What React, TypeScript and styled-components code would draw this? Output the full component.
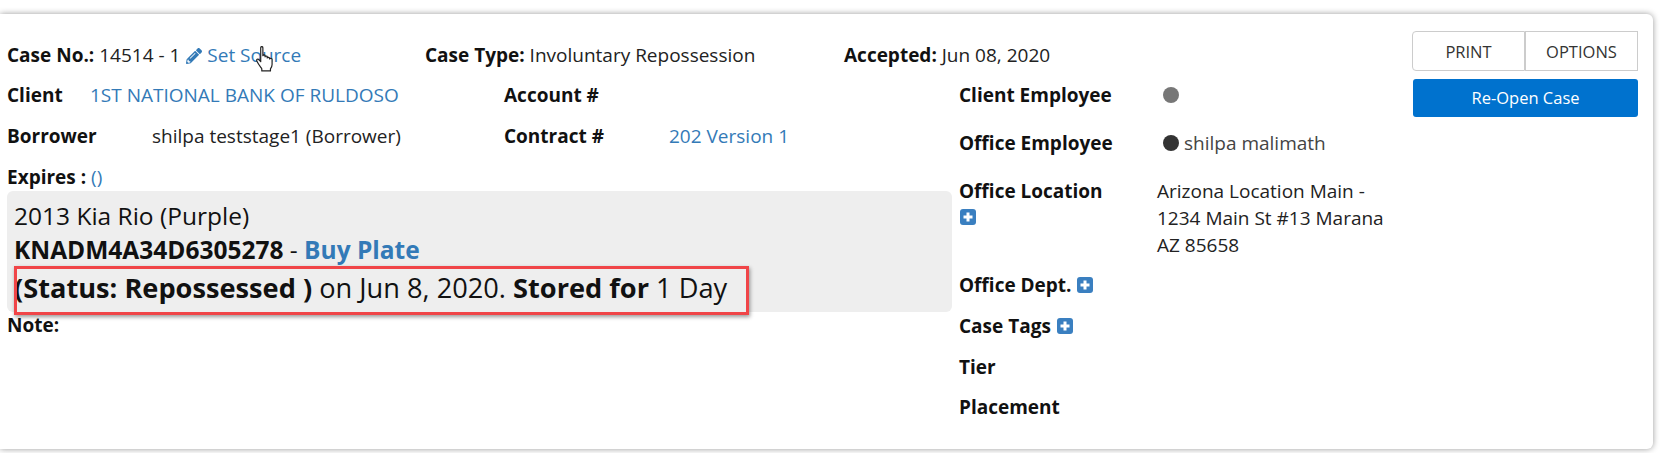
import styled, { createGlobalStyle } from "styled-components";
import { FaPencilAlt } from "react-icons/fa";

const GlobalStyle = createGlobalStyle`
  html, body {
    margin: 0;
    padding: 0;
    background: #fff;
  }
  body {
    font-family: "Open Sans", "Liberation Sans", sans-serif;
    font-size: 19px;
    color: #222;
    overflow: hidden;
  }
`;

const Page = styled.div`
  width: 1663px;
  height: 453px;
  padding-top: 14px;
  box-sizing: border-box;
  background: #fff;
`;

const Card = styled.div`
  position: relative;
  width: 1653px;
  height: 435px;
  box-sizing: border-box;
  padding: 17px 15px 0 7px;
  display: flex;
  background: #fff;
  border-radius: 0 6px 6px 0;
  box-shadow: 0 0 6px rgba(0, 0, 0, 0.4);
`;

const Main = styled.div`
  width: 1405px;
  flex: none;
`;

const HeadRow = styled.div`
  display: grid;
  grid-template-columns: 418px 419px 1fr;
  height: 38px;
  margin-top: 5px;
  align-items: center;
`;

const Body = styled.div`
  display: grid;
  grid-template-columns: 945px 1fr;
  column-gap: 7px;
`;

const Left = styled.div`
  display: flex;
  flex-direction: column;
`;

const InfoRow = styled.div`
  display: grid;
  grid-template-columns: 497px 1fr;
  height: 41px;
  align-items: center;
`;

const Field = styled.div<{ $indent: number }>`
  display: grid;
  grid-template-columns: ${(p) => p.$indent}px 1fr;
  align-items: center;
`;

const Label = styled.b`
  font-weight: 700;
  color: #111;
`;

const Value = styled.span<{ $muted?: boolean }>`
  color: ${(p) => (p.$muted ? "#444" : "#222")};
`;

const Link = styled.a`
  color: #337ab7;
  text-decoration: none;
`;

const PencilLink = styled(Link)`
  svg {
    width: 16px;
    height: 16px;
    vertical-align: -2px;
    margin: 0 5px 0 1px;
  }
`;

const Expires = styled.div`
  height: 35px;
  box-sizing: border-box;
  padding-top: 10px;
  line-height: 22px;
`;

const VehicleBox = styled.div`
  position: relative;
  height: 121px;
  box-sizing: border-box;
  padding: 8px 7px;
  background: #eee;
  border-radius: 6px;
  font-size: 24.5px;
  line-height: 34px;
  color: #111;
`;

const StatusLine = styled.div`
  white-space: nowrap;
  font-size: 27.2px;
  line-height: 38px;
  margin-top: 2px;
`;

const Highlight = styled.div`
  position: absolute;
  left: 7px;
  top: 75px;
  width: 735px;
  height: 49px;
  box-sizing: border-box;
  border: 3px solid #f04548;
  box-shadow: 1px 2px 4px rgba(0, 0, 0, 0.4);
`;

const NoteRow = styled.div`
  line-height: 26px;
`;

const Right = styled.div`
  display: flex;
  flex-direction: column;
`;

const SideRow = styled.div<{ $height: number }>`
  height: ${(p) => p.$height}px;
  display: flex;
  align-items: center;
`;

const SideLabel = styled(Label)`
  width: 204px;
  flex: none;
`;

const Dot = styled.span<{ $color: string }>`
  display: inline-block;
  width: 16px;
  height: 16px;
  border-radius: 50%;
  background: ${(p) => p.$color};
  margin-right: 5px;
  flex: none;
`;

const LocationRow = styled.div`
  display: grid;
  grid-template-columns: 198px 235px;
  height: 93px;
  box-sizing: border-box;
  padding-top: 7px;
  line-height: 27px;
`;

const PlusSvg = styled.svg`
  width: 16px;
  height: 16px;
  vertical-align: -1px;
`;

const InlinePlus = styled.span`
  display: inline-flex;
  margin-left: 1px;
`;

const PlusIcon = () => (
  <InlinePlus>
    <PlusSvg viewBox="0 0 16 16">
      <rect width="16" height="16" rx="3" fill="#3a7fc0" />
      <path d="M8 3.500v9M3.500 8h9" stroke="#fff" strokeWidth="3" />
    </PlusSvg>
  </InlinePlus>
);

const Actions = styled.div`
  width: 226px;
  flex: none;
  display: flex;
  flex-direction: column;
  gap: 8px;
`;

const ButtonGroup = styled.div`
  display: flex;
`;

const GroupButton = styled.button<{ $first?: boolean }>`
  flex: 1;
  height: 40px;
  padding: 0;
  background: #fff;
  border: 1px solid #ccc;
  border-radius: ${(p) => (p.$first ? "4px 0 0 4px" : "0")};
  font: 16.5px "Open Sans", sans-serif;
  color: #333;
`;

const PrimaryButton = styled.button`
  height: 38px;
  margin-left: 1px;
  padding: 0 0 2px;
  background: #0072ce;
  border: none;
  border-radius: 3px;
  font: 16.5px "Open Sans", sans-serif;
  color: #fff;
`;

const HandCursor = styled.svg`
  position: absolute;
  left: 255px;
  top: 32px;
  width: 19px;
  height: 26px;
`;

export default function App() {
  return (
    <>
      <GlobalStyle />
      <Page>
        <Card>
          <Main>
            <HeadRow>
              <div>
                <Label>Case No.:</Label> <Value>14514 - 1</Value>{" "}
                <PencilLink href="#">
                  <FaPencilAlt />
                  Set Source
                </PencilLink>
              </div>
              <div>
                <Label>Case Type:</Label> <Value>Involuntary Repossession</Value>
              </div>
              <div>
                <Label>Accepted:</Label> <Value>Jun 08, 2020</Value>
              </div>
            </HeadRow>
            <Body>
              <Left>
                <InfoRow>
                  <Field $indent={83}>
                    <Label>Client</Label>
                    <Link href="#">1ST NATIONAL BANK OF RULDOSO</Link>
                  </Field>
                  <Field $indent={165}>
                    <Label>Account #</Label>
                    <span />
                  </Field>
                </InfoRow>
                <InfoRow>
                  <Field $indent={145}>
                    <Label>Borrower</Label>
                    <Value>shilpa teststage1 (Borrower)</Value>
                  </Field>
                  <Field $indent={165}>
                    <Label>Contract #</Label>
                    <Link href="#">202 Version 1</Link>
                  </Field>
                </InfoRow>
                <Expires>
                  <Label>Expires :</Label> <Link href="#">()</Link>
                </Expires>
                <VehicleBox>
                  <div>2013 Kia Rio (Purple)</div>
                  <div>
                    <b>KNADM4A34D6305278</b> - <Link href="#"><b>Buy Plate</b></Link>
                  </div>
                  <StatusLine>
                    <b>(Status: Repossessed )</b> on Jun 8, 2020. <b>Stored for</b> 1 Day
                  </StatusLine>
                  <Highlight />
                </VehicleBox>
                <NoteRow>
                  <Label>Note:</Label>
                </NoteRow>
              </Left>
              <Right>
                <SideRow $height={41}>
                  <SideLabel>Client Employee</SideLabel>
                  <Dot $color="#777" />
                </SideRow>
                <SideRow $height={56}>
                  <SideLabel>Office Employee</SideLabel>
                  <Dot $color="#333" />
                  <Value $muted>shilpa malimath</Value>
                </SideRow>
                <LocationRow>
                  <div>
                    <Label>Office Location</Label>
                    <br />
                    <PlusIcon />
                  </div>
                  <Value>Arizona Location Main - 1234 Main St #13 Marana AZ 85658</Value>
                </LocationRow>
                <SideRow $height={41}>
                  <Label>Office Dept.</Label>&nbsp;<PlusIcon />
                </SideRow>
                <SideRow $height={41}>
                  <Label>Case Tags</Label>&nbsp;<PlusIcon />
                </SideRow>
                <SideRow $height={41}>
                  <Label>Tier</Label>
                </SideRow>
                <SideRow $height={40}>
                  <Label>Placement</Label>
                </SideRow>
              </Right>
            </Body>
          </Main>
          <Actions>
            <ButtonGroup>
              <GroupButton $first>PRINT</GroupButton>
              <GroupButton>OPTIONS</GroupButton>
            </ButtonGroup>
            <PrimaryButton>Re-Open Case</PrimaryButton>
          </Actions>
          <HandCursor viewBox="0 0 17 24">
            <path
              d="M5 1.500c0-1.300 2-1.300 2 0V9c0-1 2-1 2 0v1c0-1 2-1 2 0v1c0-1 2.200-.8 2.200.3V12c0-.9 2.300-.9 2.300.3V17c0 2-.8 3-1.500 4v2H6v-2c-1-1.500-3-4-4.500-7-.8-1.500.9-2.500 1.900-1.300L5 14.500z"
              fill="#fff"
              stroke="#222"
              strokeWidth="1.100"
              strokeLinejoin="round"
            />
          </HandCursor>
        </Card>
      </Page>
    </>
  );
}
